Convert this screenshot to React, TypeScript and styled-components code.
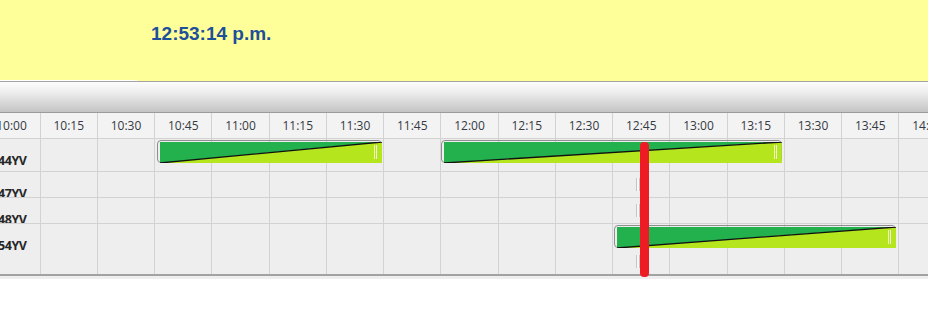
import styled, { createGlobalStyle } from 'styled-components';

const GlobalStyle = createGlobalStyle`
  html, body {
    margin: 0;
    padding: 0;
    background: #ffffff;
  }
`

// one column = 15 minutes
const CELL_W = 57.25;
const LABEL_W = 39.6;
const PX_PER_MIN = CELL_W / 15;
const NOW_MIN = 158.6; // minutes after 10:15

const headerTimes = Array.from({ length: 17 }, (_, i) => {
    const total = 10 * 60 + i * 15;
    const h = Math.floor(total / 60);
    const m = total % 60;
    return `${h}:${m.toString().padStart(2, '0')}`;
});

type Trip = { start: number; end: number };
type Vehicle = { label: string; height: number; markerTop: number; trips: Trip[] };

const vehicles: Vehicle[] = [
    { label: 'JMR-144YV', height: 32, markerTop: 7, trips: [{ start: 30.75, end: 89.7 }, { start: 105.2, end: 194.5 }] },
    { label: 'JMR-147YV', height: 25, markerTop: 6, trips: [] },
    { label: 'JMR-148YV', height: 25, markerTop: 6, trips: [] },
    { label: 'JMR-154YV', height: 50, markerTop: 31, trips: [{ start: 150.4, end: 224.4 }] },
];

const Page = styled.div`
    width: 928px;
    overflow: hidden;
    font-family: "Open Sans", "Liberation Sans", sans-serif;
`

const ClockBar = styled.div`
    display: flex;
    flex-direction: column;
    background: #ffff99;
    border-bottom: 1px solid #a3a3a3;
`

const ClockText = styled.div`
    height: 80px;
    box-sizing: border-box;
    padding: 24px 0 0 151px;
    font-family: "Liberation Sans", Arial, sans-serif;
    font-weight: bold;
    font-size: 19px;
    line-height: 19px;
    color: #1d4f9b;
`

const Highlight = styled.div`
    width: 137px;
    height: 1px;
    background: #ffffff;
`

const Toolbar = styled.div`
    height: 30px;
    background: linear-gradient(#fcfcfc, #f0f0f0 30%, #c4c4c4);
    border-bottom: 1px solid #9b9b9b;
`

const HeaderRow = styled.div`
    display: flex;
    height: 25px;
    margin-left: ${LABEL_W - CELL_W}px;
    background: #f3f3f3;
    border-bottom: 1px solid #d2d2d2;
`

const HeaderCell = styled.div`
    flex: 0 0 ${CELL_W}px;
    box-sizing: border-box;
    border-left: 1px solid #d2d2d2;
    display: flex;
    align-items: center;
    justify-content: center;
    font-size: 12px;
    color: #353a44;
`

const Body = styled.div`
    position: relative;
    background: #eeeeee;
    border-bottom: 2px solid #a2a2a2;
`

const Row = styled.div<{ $h: number; $last?: boolean }>`
    display: flex;
    height: ${p => p.$h}px;
    border-bottom: ${p => (p.$last ? 'none' : '1px solid #d2d2d2')};
    overflow: hidden;
`

const RowLabel = styled.div`
    flex: 0 0 ${LABEL_W}px;
    box-sizing: border-box;
    padding: 14px 13px 0 0;
    text-align: right;
    white-space: nowrap;
    overflow: hidden;
    direction: rtl;
    font-weight: bold;
    font-size: 12.5px;
    letter-spacing: -0.4px;
    line-height: 16px;
    color: #262626;
`

const Track = styled.div`
    position: relative;
    flex: 1;
    display: flex;
`

const Cell = styled.div`
    flex: 0 0 ${CELL_W}px;
    box-sizing: border-box;
    border-left: 1px solid #d2d2d2;
`

const NowMarker = styled.div<{ $top: number }>`
    position: absolute;
    top: ${p => p.$top}px;
    width: 2px;
    height: 13px;
    border-left: 1px solid #c4c4c4;
    border-right: 1px solid #c4c4c4;
    background: #f6f6f6;
`

const Bar = styled.div`
    position: absolute;
    top: 1px;
    height: 23px;
    box-sizing: border-box;
    border: 1px solid #8e8e8e;
    border-radius: 4px;
`

const BarFill = styled.svg`
    position: absolute;
    left: 2px;
    top: 1px;
    width: calc(100% - 1px);
    height: 100%;
    display: block;
`

const Grip = styled.div`
    position: absolute;
    right: 4px;
    top: 4px;
    bottom: 3px;
    width: 1px;
    border-left: 1px solid #eef4cf;
    border-right: 1px solid #eef4cf;
`

const NowLine = styled.div`
    position: absolute;
    top: 3px;
    width: 8.5px;
    height: 135px;
    border-radius: 4px;
    background: #ed1c24;
`

const FooterStrip = styled.div`
    height: 3px;
    background: #eeeeee;
`

function TripBar({ trip }: { trip: Trip }) {
    const left = trip.start * PX_PER_MIN;
    const width = (trip.end - trip.start) * PX_PER_MIN;
    return (
        <Bar style={{ left, width }}>
            <BarFill viewBox="0 0 100 100" preserveAspectRatio="none">
                <polygon points="0,0 100,0 0,100" fill="#22b14c" />
                <polygon points="0,100 100,0 100,100" fill="#b5e61d" />
                <line x1="0" y1="100" x2="100" y2="0" stroke="#111" strokeWidth="1.3" vectorEffect="non-scaling-stroke" />
            </BarFill>
            <Grip />
        </Bar>
    );
}

function App() {
    const nowX = NOW_MIN * PX_PER_MIN;
    return (
        <Page>
            <GlobalStyle />
            <ClockBar>
                <ClockText>12:53:14 p.m.</ClockText>
                <Highlight />
            </ClockBar>
            <Toolbar />
            <HeaderRow>
                {headerTimes.map(t => (
                    <HeaderCell key={t}>{t}</HeaderCell>
                ))}
            </HeaderRow>
            <Body>
                {vehicles.map((v, i) => (
                    <Row key={v.label} $h={v.height} $last={i === vehicles.length - 1}>
                        <RowLabel>{v.label}</RowLabel>
                        <Track>
                            {Array.from({ length: 16 }, (_, c) => <Cell key={c} />)}
                            <NowMarker $top={v.markerTop} style={{ left: nowX - 9 }} />
                            {v.trips.map((t, k) => <TripBar key={k} trip={t} />)}
                        </Track>
                    </Row>
                ))}
                <NowLine style={{ left: LABEL_W + nowX - 4.5 }} />
            </Body>
            <FooterStrip />
        </Page>
    );
}

export default App
